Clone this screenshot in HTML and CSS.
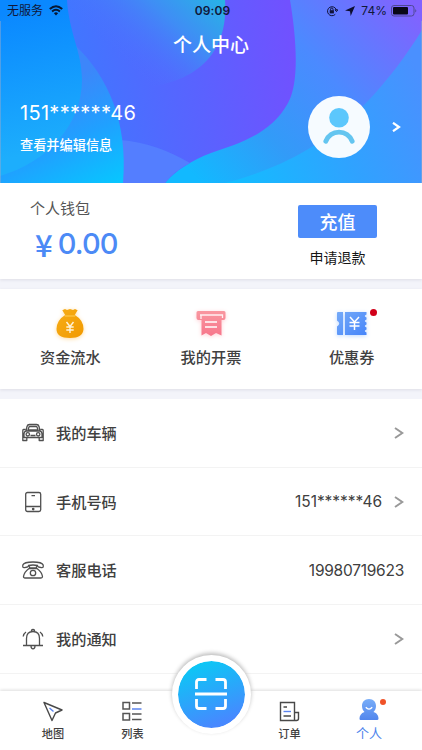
FILE: index.html
```html
<!DOCTYPE html>
<html lang="zh-CN">
<head>
<meta charset="utf-8">
<meta name="viewport" content="width=device-width, initial-scale=1">
<title>个人中心</title>
<link rel="stylesheet" href="styles.css">
</head>
<body>
<div class="app">
  <header class="hero">
    <svg class="hero-bg" viewBox="0 0 422 183" preserveAspectRatio="none" aria-hidden="true">
      <defs>
        <linearGradient id="base" gradientUnits="userSpaceOnUse" x1="200" y1="183" x2="422" y2="80"><stop offset="0" stop-color="#0cc3ff"/><stop offset=".6" stop-color="#30a2ff"/><stop offset="1" stop-color="#4a90ff"/></linearGradient>
        <linearGradient id="sweep" gradientUnits="userSpaceOnUse" x1="200" y1="183" x2="410" y2="0"><stop offset="0" stop-color="#12b9ff"/><stop offset=".3" stop-color="#329bf8"/><stop offset=".6" stop-color="#4b8aff"/><stop offset="1" stop-color="#8262ff"/></linearGradient>
        <linearGradient id="indigo" gradientUnits="userSpaceOnUse" x1="80" y1="90" x2="296" y2="60"><stop offset="0" stop-color="#4176ff"/><stop offset=".55" stop-color="#5a62ff"/><stop offset="1" stop-color="#7151ff"/></linearGradient>
        <linearGradient id="glow" gradientUnits="userSpaceOnUse" x1="225" y1="0" x2="150" y2="85"><stop offset="0" stop-color="#27b4e5"/><stop offset=".45" stop-color="#3f8df5"/><stop offset="1" stop-color="#4a72ff" stop-opacity="0"/></linearGradient>
        <linearGradient id="cyan" gradientUnits="userSpaceOnUse" x1="65" y1="80" x2="115" y2="183"><stop offset="0" stop-color="#3d86fa"/><stop offset=".5" stop-color="#20a0ff"/><stop offset="1" stop-color="#08c5ff"/></linearGradient>
        <linearGradient id="left" gradientUnits="userSpaceOnUse" x1="20" y1="10" x2="50" y2="150"><stop offset="0" stop-color="#0a88ff"/><stop offset="1" stop-color="#1daefc"/></linearGradient>
      </defs>
      <path fill="url(#base)" d="M0 0H422V183H0Z"/>
      <path fill="url(#sweep)" d="M230 0H422V30C390 82 350 125 310 148C280 166 252 176 225 183H150Z"/>
      <path fill="url(#indigo)" d="M60 0H290C296 35 300 82 288 103C271 134 240 143 211 153C192 160 175 171 165 183H60Z"/>
      <path fill="url(#glow)" d="M67 0H225C228 42 209 82 140 88C105 84 80 70 76 48Z"/>
      <path fill="#547eff" d="M120 140C146 142 170 151 190 163Q174 171 165 183H120Z"/>
      <path fill="url(#cyan)" d="M75 45C108 77 128 121 123 183H0V80Z"/>
      <path fill="url(#left)" d="M0 0H67C69 33 82 52 82 80C82 124 48 162 0 176Z"/>
      <path d="M.5 21V183M421.500 21V183" stroke="#8fa9cf" stroke-opacity=".5"/>
    </svg>
    <div class="status">
      <div class="status-side">
        <span>无服务</span>
        <svg width="14" height="11" viewBox="0 0 14 11" fill="none" stroke="#071833" stroke-width="2"><path d="M.8 4.1Q7-1.6 13.2 4.1M3.1 6.5Q7 3 10.9 6.5"/><path d="M4.9 8.2Q7 6.5 9.1 8.2L7 10.5Z" fill="#071833" stroke="none"/></svg>
      </div>
      <b class="clock">09:09</b>
      <div class="status-side status-right">
        <svg width="12" height="12" viewBox="0 0 12 12" fill="none" stroke="#101238"><path d="M9.3 9.3A4.5 4.5 0 1 1 10.3 4.8M9 4.8h2.8L10.5 6.6Z"/><path d="M3.7 5.2h4.2v3.2H3.7Z" fill="#101238" stroke="none"/><path d="M4.6 5.3V4.2a1.2 1.2 0 0 1 2.4 0v1.1"/></svg>
        <svg class="loc" width="10" height="10" viewBox="0 0 10 10"><path fill="#0c0d30" d="M10 0 5.700 10 5 5.200 0 4.500Z"/></svg>
        <span>74%</span>
        <svg width="26" height="12" viewBox="0 0 26 12"><rect x=".5" y=".5" width="22.500" height="10.500" rx="2.500" fill="none" stroke="#4f4893"/><rect x="2" y="2" width="15" height="7.500" rx="1" fill="#090817"/><path d="M24.300 4q2 1.800 0 3.600Z" fill="#4f4893"/></svg>
      </div>
    </div>
    <h1 class="title">个人中心</h1>
    <div class="profile">
      <div class="profile-text">
        <div class="phone">151******46</div>
        <div class="edit">查看并编辑信息</div>
      </div>
      <svg class="avatar" width="62" height="62" viewBox="0 0 62 62"><circle cx="31" cy="31" r="31" fill="#f6fbff"/><circle cx="31" cy="21.700" r="9.800" fill="#5cc7fc"/><path d="M17.800 45.200C23 33 39 33 44.200 45.200" fill="none" stroke="#64c5f0" stroke-width="4.800" stroke-linecap="round"/></svg>
      <svg class="hero-arrow" width="9" height="10" viewBox="0 0 9 10" fill="none" stroke="#fff" stroke-width="2.200"><path d="M1 .8 7 5 1 9.200"/></svg>
    </div>
  </header>

  <section class="wallet">
    <div class="wallet-info">
      <div class="wallet-label">个人钱包</div>
      <div class="balance"><span class="yen">¥</span>0.00</div>
    </div>
    <div class="wallet-actions">
      <button class="topup">充值</button>
      <div class="refund">申请退款</div>
    </div>
  </section>

  <nav class="shortcuts">
    <div class="shortcut">
      <svg class="shortcut-icon gold" width="30" height="32" viewBox="0 0 30 32"><defs><linearGradient id="gold" x2="1" y2="1"><stop stop-color="#f6ad18"/><stop offset="1" stop-color="#f29a00"/></linearGradient></defs><path fill="url(#gold)" d="M7.300 2.300 10 1l2 1 3-1 3 1 2-1 2.600 1.300L19.800 7Q28.500 12 28.500 21 28 30 15 30 1.500 30 1.500 21 1.800 12 10.200 7Z"/><path d="M9.800 8H20.200" stroke="#ffce55"/><path d="M11.500 14 15 18.500 18.500 14M15 18.500V25M11.300 19H18.700M11.300 22H18.700" fill="none" stroke="#fff3d8" stroke-width="1.400"/></svg>
      <span>资金流水</span>
    </div>
    <div class="shortcut">
      <svg class="shortcut-icon pink" width="30" height="32" viewBox="0 0 30 32"><defs><linearGradient id="pink" x2="0" y2="1"><stop stop-color="#f997a0"/><stop offset="1" stop-color="#f7768b"/></linearGradient></defs><path fill="url(#pink)" d="M2 3H28Q29.500 3 29.500 4.500V10Q29.500 12 27.500 12H25.500V27.500L20 25 15 28 10 25 5.500 27.500V12H2.500Q.5 12 .5 10V4.500Q.5 3 2 3Z"/><path d="M4 7H26.500V10M5 7V11" fill="none" stroke="#fff0f1" stroke-width="1.300"/><path d="M9 14H21M9 19H21" stroke="#fff" stroke-width="1.500"/></svg>
      <span>我的开票</span>
    </div>
    <div class="shortcut">
      <svg class="shortcut-icon blue" width="32" height="32" viewBox="0 0 32 32"><defs><linearGradient id="ticket" x2="1" y2="1"><stop stop-color="#75aaf8"/><stop offset="1" stop-color="#4685fa"/></linearGradient></defs><path fill="url(#ticket)" d="M2 4H7V27H2Q1 27 1 26V18.500Q5.500 15.500 1 12.500V5Q1 4 2 4ZM9 4H30.500V6.500Q27 8 30.500 9.500V11.500Q27 13 30.500 14.500V16.500Q27 18 30.500 19.500V21.500Q27 23 30.500 24.500V27H9Z"/><path d="M14 9 18.500 14 23 9M18.500 14V22M13.500 14.500H23.500M13.500 18H23.500" fill="none" stroke="#fff" stroke-width="1.500"/></svg>
      <i class="dot coupon-dot"></i>
      <span>优惠券</span>
    </div>
  </nav>

  <main class="list">
    <div class="row">
      <svg class="row-icon" viewBox="0 0 22 22"><path d="M4 9 5 4.500Q5.500 2.500 7.500 2.500H14.500Q16.500 2.500 17 4.500L18 9M6 8 7 5Q7.200 4.500 8 4.500H14Q14.800 4.500 15 5L16 8ZM4 9H18Q20 9.500 20 12V15.500H2V12Q2 9.500 4 9ZM3.500 7.500H1.500Q.8 7.500.8 8.500V18.500H4.800V15.500M18.500 7.500H20.500Q21.200 7.500 21.200 8.500V18.500H17.200V15.500M8.500 13.500H13.500"/><circle cx="5.800" cy="12.300" r="1.700"/><circle cx="16.200" cy="12.300" r="1.700"/></svg>
      <span class="row-label">我的车辆</span>
      <svg class="chevron" viewBox="0 0 10 12"><path d="M1 1 8.300 6 1 11"/></svg>
    </div>
    <div class="row">
      <svg class="row-icon" viewBox="0 0 22 22"><rect x="3.700" y="1.500" width="15" height="19" rx="1.800"/><path d="M3.700 15.500H18.700M9.500 4.700H13"/><circle cx="11.200" cy="18.100" r=".7"/></svg>
      <span class="row-label">手机号码</span>
      <span class="row-value">151******46</span>
      <svg class="chevron" viewBox="0 0 10 12"><path d="M1 1 8.300 6 1 11"/></svg>
    </div>
    <div class="row">
      <svg class="row-icon" viewBox="0 0 22 22"><path d="M.8 8V6Q2 3 11 3T21.200 6V8Q20.700 8.800 19.500 8.600L16.500 8Q15.500 7.700 15.500 6.500 11 5.500 6.500 6.500 6.500 7.700 5.500 8L2.500 8.600Q1.300 8.800.8 8ZM7.500 6.500V9H14.500V6.500M7 9.500H15Q19.800 13 20.500 17.500 20.500 19 19 19H3Q1.500 19 1.500 17.500 2.200 13 7 9.500Z"/><circle cx="11" cy="14" r="2.700"/></svg>
      <span class="row-label">客服电话</span>
      <span class="row-value hotline">19980719623</span>
    </div>
    <div class="row">
      <svg class="row-icon" viewBox="0 0 22 22"><path d="M1 17.500H21M4.500 17.500V10.500Q4.500 3.500 11 3.500T17.500 10.500V17.500M9 18Q9 20.800 11 20.800T13 18M9.500 3.500Q9.200 1.500 11 1.500T12.500 3.500M1.200 8.500Q1.700 5.500 4 4M20.800 8.500Q20.300 5.500 18 4"/></svg>
      <span class="row-label">我的通知</span>
      <svg class="chevron" viewBox="0 0 10 12"><path d="M1 1 8.300 6 1 11"/></svg>
    </div>
    <div class="list-end"></div>
  </main>

  <footer class="tabs">
    <div class="tab">
      <svg width="22" height="22" viewBox="0 0 22 22" fill="none" stroke="#484848" stroke-width="1.400" stroke-linejoin="round"><path d="M2 2.500 20 10 13.500 13 10 20.500Z"/><path d="M7.500 8 11.500 11.500" stroke="#5b83ee"/></svg>
      <span>地图</span>
    </div>
    <div class="tab">
      <svg width="22" height="22" viewBox="0 0 22 22" fill="none" stroke="#555" stroke-width="1.500"><path d="M1 2.500H7.500V9H1ZM1 13.500H7.500V20H1ZM10 3H19.500M10 14H19.500M10 19.500H19.500"/><path d="M10 9H19.500" stroke="#5b83ee"/></svg>
      <span>列表</span>
    </div>
    <div class="scan">
      <svg width="34" height="34" viewBox="0 0 34 34" fill="none" stroke="#fff" stroke-width="2.800"><path d="M2.500 12V5Q2.500 2.500 5 2.500H12.500M21.500 2.500H29Q31.500 2.500 31.500 5V12M2.500 22V29Q2.500 31.500 5 31.500H12.500M21.500 31.500H29Q31.500 31.500 31.500 29V22M1 17H33"/></svg>
    </div>
    <div class="tab order">
      <svg width="22" height="22" viewBox="0 0 22 22" fill="none" stroke="#484848" stroke-width="1.400"><path d="M15.500 20.500H1.500V2.500H15.500V20.500H17.500Q19.500 20.500 19.500 18.500V12.500H15.500M4.500 7H8M4.500 16H12"/><path d="M4.500 11.500H12" stroke="#5b83ee"/></svg>
      <span>订单</span>
    </div>
    <div class="tab active">
      <svg width="22" height="22" viewBox="0 0 22 22"><defs><linearGradient id="person" x2="0" y2="1"><stop stop-color="#78adf8"/><stop offset="1" stop-color="#5286ed"/></linearGradient></defs><path fill="url(#person)" d="M11 0C6.500 0 4 3 4 7 4 9.500 5 11.500 6.500 13 3 14 1.500 17 1.500 19.500 1.500 20.800 2 21 3 21H19Q20.500 21 20.500 19.500C20.500 17 19 14 15.500 13 17 11.500 18 9.500 18 7 18 3 15.500 0 11 0Z"/><path d="M7.800 8.200Q11 12 14.200 8.200" fill="none" stroke="#fff" stroke-width="1.400"/></svg>
      <i class="dot tab-dot"></i>
      <span>个人</span>
    </div>
  </footer>
</div>
</body>
</html>
```
FILE: styles.css
```css
* { box-sizing: border-box; }

body {
  margin: 0;
  background: #fff;
  color: #404040;
  font-family: Inter, "Noto Sans CJK SC", sans-serif;
}

.app {
  display: flex;
  flex-direction: column;
  width: 422px;
  height: 750px;
  overflow: hidden;
  background: #f3f4fa;
}

svg { display: block; flex: none; }

.hero {
  position: relative;
  height: 183px;
  flex: none;
  color: #fff;
}

.hero-bg {
  position: absolute;
  inset: 0;
  width: 100%;
  height: 100%;
}

.status, .title, .profile { position: relative; }

.status {
  display: grid;
  grid-template-columns: 1fr auto 1fr;
  align-items: center;
  height: 21px;
  padding: 0 5px 0 7px;
  color: #10183a;
  font-size: 12px;
  line-height: 20px;
}

.status-side { display: flex; align-items: center; gap: 6px; }
.status-right { justify-content: flex-end; gap: 4px; }
.loc { margin: 0 2px 0 3px; }
.clock { padding-left: 1px; font-size: 12px; font-weight: 600; letter-spacing: .1px; }

.title {
  height: 49px;
  margin: 0;
  font-size: 19px;
  font-weight: 500;
  line-height: 50px;
  text-align: center;
}

.profile {
  display: flex;
  align-items: center;
  height: 113px;
  padding: 0 21px 0 20px;
}

.profile-text { flex: 1; }
.phone { font-size: 20px; line-height: 30px; letter-spacing: .3px; }
.edit { margin-top: 7px; font-size: 13.200px; font-weight: 500; line-height: 20px; }
.hero-arrow { margin-left: 22px; }

.wallet {
  display: flex;
  justify-content: space-between;
  height: 96px;
  flex: none;
  padding: 15px 45px 0 30px;
  background: #fff;
  box-shadow: 0 1px 3px #dddde6;
}

.wallet-label { color: #555; font-size: 15px; line-height: 22px; }
.balance {
  display: flex;
  align-items: center;
  gap: 6px;
  margin: 7px 0 0 5px;
  color: #4c8af6;
  font-size: 29px;
  font-weight: 500;
  line-height: 34px;
  letter-spacing: -.9px;
}
.yen { font-family: "Noto Sans CJK SC", sans-serif; font-size: 31px; }

.wallet-actions { padding-top: 7px; text-align: center; }
.topup {
  display: block;
  width: 79px;
  height: 33px;
  padding: 0;
  border: 0;
  border-radius: 2px;
  background: #4d8cfa;
  color: #fff;
  font: 500 18px/33px "Noto Sans CJK SC", sans-serif;
}
.refund { margin-top: 10px; color: #151515; font-size: 14px; line-height: 20px; }

.shortcuts {
  display: grid;
  grid-template-columns: repeat(3, 1fr);
  height: 100px;
  flex: none;
  margin-top: 10px;
  background: #fff;
  box-shadow: 0 1px 3px #dddde6;
  font-size: 15.200px;
  font-weight: 500;
}

.shortcut {
  position: relative;
  display: flex;
  flex-direction: column;
  align-items: center;
  padding-top: 19px;
  line-height: 24px;
}
.shortcut > span { margin-top: 6px; }
.gold { filter: drop-shadow(0 1px 2px #ffdca0); }
.pink { filter: drop-shadow(0 1px 2px #ffd1d6); }
.blue { filter: drop-shadow(0 1px 2px #bdd8ff); }

.dot { position: absolute; border-radius: 50%; }
.coupon-dot { top: 20px; right: 45px; width: 7px; height: 7px; background: #d10019; }

.list { flex: none; margin-top: 10px; background: #fff; }
.row {
  display: flex;
  align-items: center;
  height: 68.700px;
  padding: 0 18px 0 22px;
  border-bottom: 1px solid #f3f3f3;
}
.row-icon {
  width: 22px;
  height: 22px;
  fill: none;
  stroke: #505050;
  stroke-width: 1.300;
  stroke-linejoin: round;
}
.row-label { flex: 1; margin-left: 12px; padding-bottom: 2px; font-size: 15.200px; font-weight: 500; }
.row-value { font-size: 15.500px; letter-spacing: -.05px; }
.hotline { letter-spacing: -.25px; }
.chevron {
  width: 10px;
  height: 12px;
  margin-left: 12px;
  fill: none;
  stroke: #999;
  stroke-width: 2;
}
.list-end { height: 17.200px; }

.tabs {
  display: grid;
  grid-template-columns: 106px 53px 104px 53px 106px;
  height: 59px;
  flex: none;
  background: #fff;
  box-shadow: 0 -1px 3px #ddd;
}
.tab {
  position: relative;
  display: flex;
  flex-direction: column;
  align-items: center;
  padding-top: 9px;
  font-size: 11.200px;
  font-weight: 500;
  line-height: 18px;
}
.tab > span { margin-top: 3px; }
.active { padding-top: 8px; color: #4d83ec; font-size: 13px; font-weight: 400; }
.tab-dot { top: 8px; left: 64px; width: 6px; height: 6px; background: #f05228; }

.scan {
  position: relative;
  display: flex;
  align-items: center;
  justify-content: center;
  justify-self: center;
  width: 79px;
  height: 79px;
  margin-top: -36px;
  border: 6px solid #fff;
  border-radius: 50%;
  background: linear-gradient(160deg, #0bc8f5 10%, #4788ff 85%) padding-box, #fff border-box;
  box-shadow: 0 -2px 4px #bbb;
}
```
